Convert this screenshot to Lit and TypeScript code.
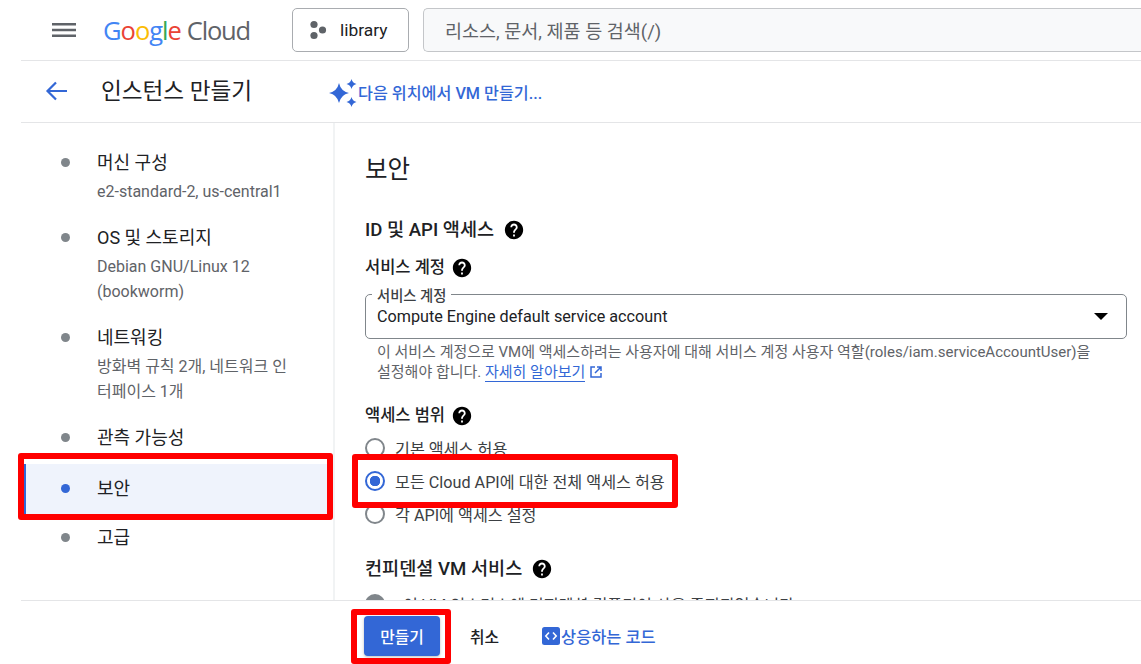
import { LitElement, html, css, svg } from "lit";
import { customElement } from "lit/decorators.js";

const help = (size = 22) => html`<svg class="help" width=${size} height=${size} viewBox="0 0 24 24"><path fill="#000" d="M12 2C6.48 2 2 6.48 2 12s4.48 10 10 10 10-4.48 10-10S17.52 2 12 2zm1 17h-2v-2h2v2zm2.07-7.75l-.9.92C13.45 12.9 13 13.5 13 15h-2v-.5c0-1.1.45-2.1 1.17-2.83l1.24-1.26c.37-.36.59-.86.59-1.41 0-1.1-.9-2-2-2s-2 .9-2 2H8c0-2.21 1.79-4 4-4s4 1.79 4 4c0 .88-.36 1.68-.93 2.25z"/></svg>`;

const star = (cx: number, cy: number, r: number) =>
  svg`<path d="M${cx} ${cy - r}Q${cx + r * 0.18} ${cy - r * 0.18} ${cx + r} ${cy}Q${cx + r * 0.18} ${cy + r * 0.18} ${cx} ${cy + r}Q${cx - r * 0.18} ${cy + r * 0.18} ${cx - r} ${cy}Q${cx - r * 0.18} ${cy - r * 0.18} ${cx} ${cy - r}Z"/>`;

@customElement("app-root")
export class AppRoot extends LitElement {
  static styles = css`
    :host {
      display: flex;
      flex-direction: column;
      width: 1141px;
      height: 664px;
      overflow: hidden;
      background: #fff;
      color: #202124;
      font-family: Roboto, "Noto Sans CJK KR", sans-serif;
    }
    .top {
      height: 60px;
      flex: none;
      margin-left: 21px;
      border-bottom: 1px solid #e4e5e7;
      display: flex;
      align-items: center;
      padding-left: 31px;
    }
    .menu { display: block; }
    .logo {
      margin-left: 27px;
      width: 189px;
      font-family: "Open Sans", sans-serif;
      font-size: 25.5px;
      letter-spacing: -1px;
      white-space: nowrap;
    }
    .logo .cloud { color: #5f6368; margin-left: 6px; letter-spacing: -1.2px; }
    .project {
      width: 117px;
      height: 44px;
      box-sizing: border-box;
      border: 1px solid #a9acb0;
      border-radius: 5px;
      display: flex;
      align-items: center;
      padding-left: 17px;
      gap: 12px;
      font-size: 17.4px;
      color: #202124;
    }
    .search {
      margin-left: 14px;
      flex: 1;
      height: 44px;
      box-sizing: border-box;
      border: 1px solid #c4c6c9;
      border-right: none;
      border-radius: 5px 0 0 5px;
      background: #f8f9fa;
      display: flex;
      align-items: center;
      padding-left: 21px;
      font-size: 18.5px;
      color: #5f6368;
    }
    .sub {
      height: 61px;
      flex: none;
      margin-left: 21px;
      border-bottom: 1px solid #e4e5e7;
      display: flex;
      align-items: center;
      padding-left: 24px;
    }
    .sub > svg { margin-bottom: 2px; }
    .sub h1 {
      margin: 0 0 4px 34px;
      font-size: 22.6px;
      font-weight: 400;
      width: 228px;
      color: #202124;
    }
    .ai {
      display: flex;
      align-items: center;
      color: #3367d6;
      font-size: 16.2px;
      font-weight: 500;
    }
    .body { flex: 1; display: flex; min-height: 0; margin-left: 21px; }
    .nav {
      width: 312px;
      flex: none;
      border-right: 2px solid #f1f3f4;
      padding-top: 15px;
    }
    .item {
      position: relative;
      padding: 12px 0 13px 76px;
      font-size: 18px;
      line-height: 25px;
    }
    .item::before {
      content: "";
      position: absolute;
      left: 40px;
      top: 20px;
      width: 9px;
      height: 9px;
      border-radius: 50%;
      background: #80868b;
    }
    .item small {
      display: block;
      font-size: 16px;
      line-height: 25px;
      color: #5f6368;
      margin: 4px 0 -4px;
    }
    .item.on {
      background: #eff3fc;
      margin-left: 3px;
      border-left: 2px solid #3367d6;
      padding-left: 71px;
      top: 1px;
    }
    .item.on::before { background: #3367d6; left: 35px; }
    .item.on::after {
      content: "";
      position: absolute;
      left: -8px;
      right: 0;
      top: -11px;
      bottom: -6px;
      border: 6px solid #f00;
      border-radius: 3px;
    }
    .main {
      flex: 1;
      min-width: 0;
      overflow: hidden;
      padding: 32px 14px 0 30px;
    }
    .main h2 {
      margin: 0;
      font-size: 24.5px;
      line-height: 30px;
      font-weight: 400;
    }
    .main h3 {
      margin: 33px 0 0;
      display: flex;
      align-items: center;
      gap: 9px;
      font-size: 18.6px;
      line-height: 24px;
      font-weight: 500;
    }
    .label {
      display: flex;
      align-items: center;
      gap: 6px;
      font-size: 16.5px;
      line-height: 24px;
      font-weight: 500;
    }
    .label.first { margin-top: 14px; }
    .label.second { margin-top: 22px; }
    .select {
      position: relative;
      height: 45px;
      box-sizing: border-box;
      margin-top: 14px;
      border: 1px solid #80868b;
      border-radius: 5px;
      padding: 12px 0 0 11px;
      font-size: 16.2px;
      line-height: 20px;
    }
    .select .float {
      position: absolute;
      left: 6px;
      top: -7px;
      padding: 0 5px;
      background: #fff;
      font-size: 14.3px;
      line-height: 16px;
      font-weight: 500;
      color: #3c4043;
    }
    .select .caret {
      position: absolute;
      right: 18px;
      top: 18px;
      width: 0;
      height: 0;
      border-left: 7px solid transparent;
      border-right: 7px solid transparent;
      border-top: 7px solid #000;
    }
    .hint {
      margin: 3px 0 0 12px;
      font-size: 15px;
      line-height: 20px;
      color: #5f6368;
    }
    .hint a {
      color: #3367d6;
      border-bottom: 1px solid #3367d6;
    }
    .hint svg { vertical-align: -2px; }
    .radios { margin-top: 3px; }
    .radio {
      position: relative;
      display: flex;
      align-items: center;
      height: 33px;
      gap: 10px;
      font-size: 16.2px;
      color: #3c4043;
    }
    .radio i {
      flex: none;
      width: 20px;
      height: 20px;
      box-sizing: border-box;
      border: 2px solid #80868b;
      border-radius: 50%;
      background: #fff;
    }
    .radio.on { z-index: 1; isolation: isolate; }
    .radio.on::before {
      content: "";
      position: absolute;
      z-index: -1;
      left: -13px;
      top: -10px;
      width: 326px;
      height: 54px;
      box-sizing: border-box;
      background: #fff;
      border: 6px solid #f00;
      border-radius: 3px;
    }
    .radio.on i {
      border-color: #3367d6;
      background: radial-gradient(circle, #3367d6 0 5px, #fff 5.5px);
    }
    .main h3.conf { margin-top: 27px; }
    .disabled {
      display: flex;
      align-items: center;
      margin-top: 8px;
      height: 30px;
      font-size: 16.2px;
      color: #3c4043;
    }
    .disabled i {
      width: 20px;
      height: 20px;
      border-radius: 50%;
      background: #80868b;
      margin-right: 18px;
      flex: none;
    }
    .foot {
      flex: none;
      margin-left: 21px;
      border-top: 1px solid #e4e5e7;
      display: flex;
      align-items: center;
      padding: 7px 0 0 343px;
      height: 56px;
    }
    .create {
      position: relative;
      width: 76px;
      height: 40px;
      border-radius: 4px;
      background: #3367d6;
      color: #fff;
      font-size: 15.8px;
      font-weight: 500;
      display: flex;
      align-items: center;
      justify-content: center;
      box-shadow: 0 1px 3px rgba(60, 64, 67, 0.35);
    }
    .create::after {
      content: "";
      position: absolute;
      left: -13px;
      right: -11px;
      top: -7px;
      bottom: -8px;
      border: 6px solid #f00;
      border-radius: 3px;
    }
    .cancel {
      margin-left: 30px;
      font-size: 15.8px;
      font-weight: 500;
      color: #202124;
    }
    .code {
      margin-left: 43px;
      display: flex;
      align-items: center;
      gap: 1px;
      color: #3367d6;
      font-size: 16.4px;
      font-weight: 500;
    }
  `;

  render() {
    return html`
      <div class="top">
        <svg class="menu" width="24" height="16" viewBox="0 0 24 16"><path fill="#5f6368" d="M0 1h24v2.4H0zM0 6.8h24v2.4H0zM0 12.6h24V15H0z"/></svg>
        <div class="logo"><span style="color:#4285f4">G</span><span style="color:#ea4335">o</span><span style="color:#fbbc04">o</span><span style="color:#4285f4">g</span><span style="color:#34a853">l</span><span style="color:#ea4335">e</span><span class="cloud">Cloud</span></div>
        <div class="project">
          <svg width="18" height="20" viewBox="0 0 18 20"><g fill="#5f6368"><circle cx="4" cy="4.5" r="3.6"/><circle cx="4" cy="15.5" r="3.6"/><circle cx="12.5" cy="10" r="3.6"/></g></svg>
          <span>library</span>
        </div>
        <div class="search">리소스, 문서, 제품 등 검색(/)</div>
      </div>
      <div class="sub">
        <svg width="22" height="22" viewBox="0 0 22 22"><path fill="none" stroke="#3367d6" stroke-width="2.2" d="M22 11H3M11 2.5 2.5 11l8.5 8.5"/></svg>
        <h1>인스턴스 만들기</h1>
        <div class="ai">
          <svg width="29" height="30" viewBox="0 0 29 30" fill="#3367d6">${star(10, 16, 10)}${star(22.5, 7, 5)}${star(22.5, 25, 5)}</svg>
          <span>다음 위치에서 VM 만들기...</span>
        </div>
      </div>
      <div class="body">
        <nav class="nav">
          <div class="item">머신 구성<small>e2-standard-2, us-central1</small></div>
          <div class="item">OS 및 스토리지<small>Debian GNU/Linux 12<br />(bookworm)</small></div>
          <div class="item">네트워킹<small>방화벽 규칙 2개, 네트워크 인<br />터페이스 1개</small></div>
          <div class="item">관측 가능성</div>
          <div class="item on">보안</div>
          <div class="item">고급</div>
        </nav>
        <section class="main">
          <h2>보안</h2>
          <h3>ID 및 API 액세스 ${help()}</h3>
          <div class="label first">서비스 계정 ${help()}</div>
          <div class="select">
            <span class="float">서비스 계정</span>
            Compute Engine default service account
            <span class="caret"></span>
          </div>
          <p class="hint">이 서비스 계정으로 VM에 액세스하려는 사용자에 대해 서비스 계정 사용자 역할(roles/iam.serviceAccountUser)을<br />설정해야 합니다. <a>자세히 알아보기</a> <svg width="14" height="14" viewBox="0 0 14 14"><path fill="none" stroke="#3367d6" stroke-width="1.5" d="M6 2H2v10h10V8M8 2h4v4M12 2 6 8"/></svg></p>
          <div class="label second">액세스 범위 ${help()}</div>
          <div class="radios">
            <div class="radio"><i></i>기본 액세스 허용</div>
            <div class="radio on"><i></i>모든 Cloud API에 대한 전체 액세스 허용</div>
            <div class="radio"><i></i>각 API에 액세스 설정</div>
          </div>
          <h3 class="conf">컨피덴셜 VM 서비스 ${help()}</h3>
          <div class="disabled"><i></i>이 VM 인스턴스에 컨피덴셜 컴퓨팅이 사용 중지되었습니다</div>
        </section>
      </div>
      <div class="foot">
        <div class="create">만들기</div>
        <div class="cancel">취소</div>
        <div class="code">
          <svg width="18" height="18" viewBox="0 0 18 18"><rect width="18" height="18" rx="2.5" fill="#3367d6"/><path fill="none" stroke="#fff" stroke-width="1.6" d="M7 5.5 3.8 9 7 12.5M11 5.5 14.2 9 11 12.5"/></svg>
          <span>상응하는 코드</span>
        </div>
      </div>
    `;
  }
}
